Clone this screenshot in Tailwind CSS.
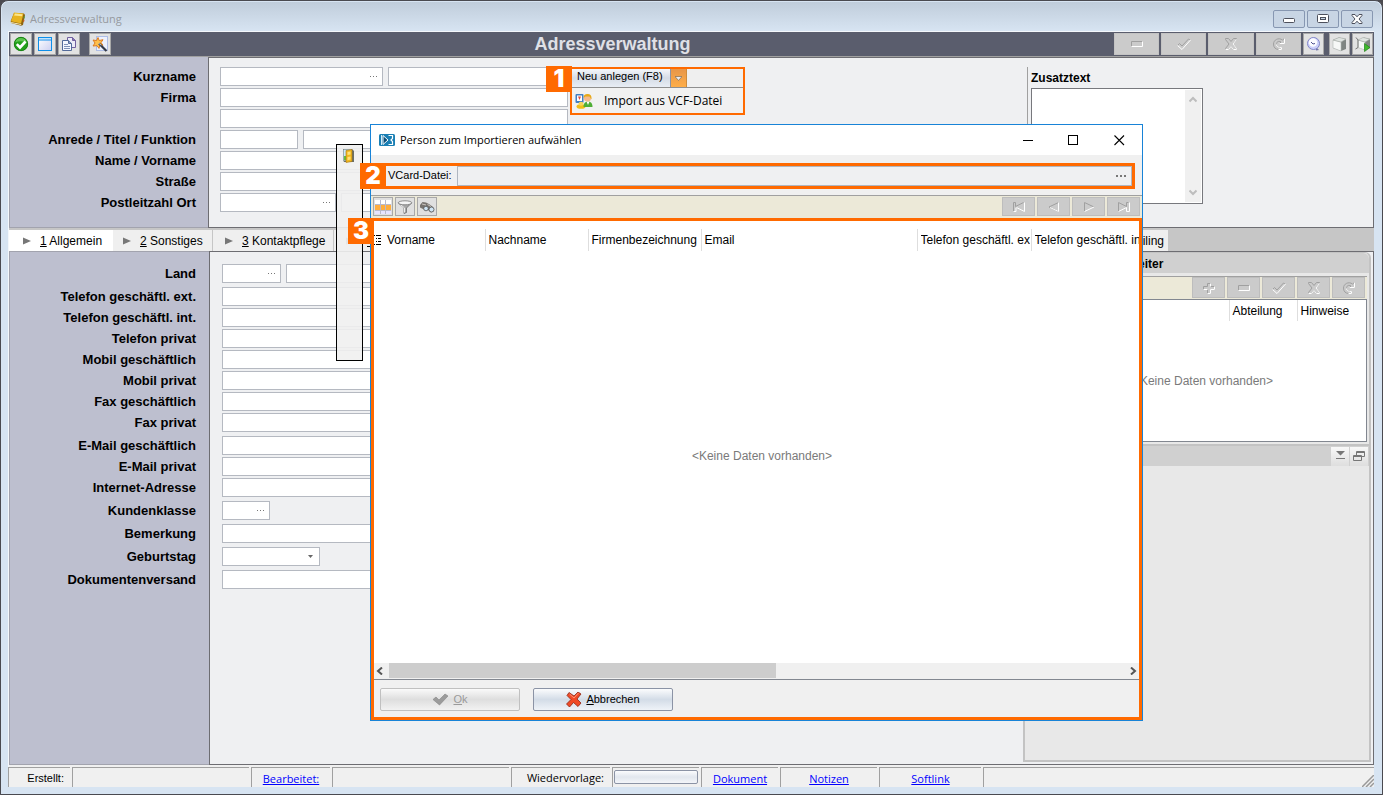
<!DOCTYPE html>
<html lang="de">
<head>
<meta charset="utf-8">
<title>Adressverwaltung</title>
<script src="https://cdn.jsdelivr.net/npm/@tailwindcss/browser@4"></script>
</head>
<body class="h-screen overflow-hidden bg-[#4b4a50] font-['Liberation_Sans',Arial,sans-serif] text-xs text-black">
<svg class="hidden">
  <symbol id="minus" viewBox="0 0 14 14"><path d="M1.500 9.500v-5h11" fill="none" stroke="#a0a0a0"/><path d="M12.500 4.500v5h-11" fill="none" stroke="#fff"/></symbol>
  <symbol id="plus" viewBox="0 0 14 14"><path d="M5.500 2.500h3v3h4v3h-4v4h-3v-4h-4v-3h4z" fill="none" stroke="#a0a0a0"/><path d="M8.500 2.500v3M12.500 5.500v3h-4v4h-3M1.500 8.500h4" fill="none" stroke="#fff"/></symbol>
  <symbol id="check" viewBox="0 0 14 14"><path d="M.5 8.500l2-2 2.500 2.500 6.500-7 1.500 1" fill="none" stroke="#a0a0a0"/><path d="M.5 8.500l4.500 4L13.500 3" fill="none" stroke="#fff"/></symbol>
  <symbol id="cross" viewBox="0 0 14 14"><path d="M1.500 1.500h3l2.500 3 2.500-3h3v1L9 7l3.500 4.500v1h-3L7 9.500l-2.500 3h-3v-1L5 7 1.500 2.500z" fill="none" stroke="#a0a0a0"/><path d="M12.500 2.500L9 7l3.500 4.500v1h-3L7 9.500l-2.500 3h-3" fill="none" stroke="#fff"/></symbol>
  <symbol id="redo" viewBox="0 0 14 14"><path d="M12.500 1.500v5h-5l1.500-1.500C6 3.500 4.500 5 4.500 7.500s2 3 5 3v2H7C3.500 12.500 1.500 10.500 1.500 7c0-4 5-7 9-4z" fill="none" stroke="#a0a0a0"/><path d="M12.500 1.500v5h-5M4.500 7.500c0 2.500 2 3 5 3v2H6.500" fill="none" stroke="#fff"/></symbol>
  <symbol id="prev" viewBox="0 0 14 14"><path d="M11.500 2.500L2 7l9.500 4.500" fill="none" stroke="#a0a0a0"/><path d="M11.500 2.500v9L3 7.500" fill="none" stroke="#fff"/></symbol>
  <symbol id="next" viewBox="0 0 14 14"><path d="M2.500 11.500v-9L12 7" fill="none" stroke="#a0a0a0"/><path d="M2.500 11.500L12 7" fill="none" stroke="#fff"/></symbol>
  <symbol id="first" viewBox="0 0 14 14"><path d="M1.500 11.500v-9h2v4l8-4" fill="none" stroke="#a0a0a0"/><path d="M12.500 2.500v9l-8-4M4 8v3.500H1.500" fill="none" stroke="#fff"/></symbol>
  <symbol id="last" viewBox="0 0 14 14"><path d="M1.500 11.500v-9l8 4v-4h2" fill="none" stroke="#a0a0a0"/><path d="M1.500 11.500l8-4v4h3v-9" fill="none" stroke="#fff"/></symbol>
  <symbol id="tri" viewBox="0 0 8 8"><path d="M0 0.500L8 4L0 7.500z" fill="#777"/></symbol>
  <symbol id="dots" viewBox="0 0 8 2"><path d="M0 0h1v1H0zM3 0h1v1H3zM6 0h1v1H6z" fill="#777"/></symbol>
</svg>

<main class="relative flex h-full flex-col rounded-t-lg border border-[#4a4a50] bg-[#d7e4f2] p-px">
  <header class="flex h-[29px] shrink-0 items-center gap-1 rounded-t-md bg-linear-to-b from-[#c0cddb] to-[#d7e4f2] px-2 pt-[5px]">
    <svg class="size-4" viewBox="0 0 16 16"><path d="M4 2l10 .5L15 4l-2 10-2 .8L1 12l-.3-2z" fill="#8d6410"/><path d="M4 1.500l9.500 1L11 12.500 1 10.300z" fill="#e7b320"/><path d="M5 2.500l7.500.7-.5 2-8-.8z" fill="#fbe58a"/><path d="M1 11l10 2 .3 1L1.300 12z" fill="#fff1bd"/><path d="M14 5l1 .5-.5 2-1-.3z" fill="#58a044"/><path d="M13.500 8.500l1 .5-.5 2-1-.3z" fill="#cf5b24"/></svg>
    <h1 class="font-['Open_Sans',sans-serif] text-[11px] text-[#969a9f]">Adressverwaltung</h1>
    <div class="ml-auto flex gap-[2px]">
      <button aria-label="Minimieren" class="flex h-[18px] w-8 items-center justify-center rounded-xs border border-[#8797b1] bg-[#c8d5e4]"><svg class="h-3 w-3" viewBox="0 0 12 12"><rect x=".5" y="5.500" width="11" height="4" rx="1" fill="#fff" stroke="#4d505c"/></svg></button>
      <button aria-label="Maximieren" class="flex h-[18px] w-8 items-center justify-center rounded-xs border border-[#8797b1] bg-[#c8d5e4]"><svg class="h-3 w-3" viewBox="0 0 12 12"><rect x=".5" y="1.500" width="11" height="8" rx="1" fill="#fff" stroke="#4d505c"/><rect x="3.500" y="4.500" width="5" height="2" fill="#c8d5e4" stroke="#4d505c"/></svg></button>
      <button aria-label="Schließen" class="flex h-[18px] w-8 items-center justify-center rounded-xs border border-[#8797b1] bg-[#c8d5e4]"><svg class="h-3 w-3" viewBox="0 0 12 12"><path d="M1 1.500h3l2 2.300 2-2.300h3v1L8 6l3 3.500v1H8L6 8.200 4 10.500H1v-1L4 6 1 2.500z" fill="#fff" stroke="#4d505c"/></svg></button>
    </div>
  </header>

  <div class="mr-[7px] mb-[6px] ml-[6px] flex min-h-0 flex-1 flex-col border-l border-t border-[#f4f7fb] bg-[#f0f0f0]">
    <div class="flex h-[25px] shrink-0 items-center border-b border-[#a0a0a0] bg-[#5a5d6d] px-px">
      <div class="flex items-center gap-[2px]">
        <button aria-label="Übernehmen" class="flex size-[22px] items-center justify-center border border-[#a8a8a8] bg-[#e2e2e2]"><svg class="size-4" viewBox="0 0 16 16"><circle cx="8" cy="8" r="7" fill="#22a01a"/><path d="M2 6.500a6.300 6.300 0 0112 0Q8 4 2 6.500z" fill="#5cc44e"/><circle cx="8" cy="8" r="6.700" fill="none" stroke="#12780c" stroke-width=".8"/><path d="M3.800 8.200L7 11.500 12.500 5.500" fill="none" stroke="#fff" stroke-width="2.600"/></svg></button>
        <button aria-label="Fenster" class="flex size-[22px] items-center justify-center border border-[#a8a8a8] bg-[#e2e2e2]"><svg class="size-4" viewBox="0 0 16 16"><defs><linearGradient id="lav" x2="1" y2="1"><stop stop-color="#fff"/><stop offset="1" stop-color="#ccd0f2"/></linearGradient></defs><rect x="1.500" y="1.500" width="13" height="13" fill="url(#lav)" stroke="#0d8ee9"/><path d="M2 2.500h12" stroke="#bfe4ff"/><path d="M1 4h14" stroke="#0d8ee9"/></svg></button>
        <button aria-label="Kopieren" class="flex size-[22px] items-center justify-center border border-[#a8a8a8] bg-[#e2e2e2]"><svg class="size-4" viewBox="0 0 16 16"><path d="M6.500 1.500h5l3 3v7h-8z" fill="#ecebf7" stroke="#71609f"/><path d="M11.500 1.500v3h3" fill="#8775b5" stroke="#71609f"/><path d="M1.500 4.500h6l3 3v7h-9z" fill="#f4f7ff" stroke="#536a9a"/><path d="M7.500 4.500v3h3" fill="#8ea0c4" stroke="#536a9a"/><path d="M3 8.500h4M3 10.500h6M3 12.500h6" stroke="#7f92b8"/></svg></button>
        <button aria-label="Assistent" class="ml-[7px] flex size-[22px] items-center justify-center border border-[#a8a8a8] bg-[#e2e2e2]"><svg class="size-4" viewBox="0 0 16 16"><rect x="4.500" y=".5" width="11" height="14" fill="#edf1fd" stroke="#aebde6"/><path d="M6 1.500l1.200 3 3.800-.8-2 3 2 2.500-3.200.2-.8 3-2-2.700L1 10l2-3L1 4l3.500.6z" fill="#ffc04a" stroke="#d9741a" stroke-width=".9"/><path d="M7 7.500l7.500 7.500" stroke="#333a48" stroke-width="2.200"/><path d="M7 7.300l2 2" stroke="#e4e6ee"/></svg></button>
      </div>
      <h2 class="flex-1 text-center text-lg leading-6 font-bold text-[#dfe0e6]">Adressverwaltung</h2>
      <div class="flex items-center gap-[2px]">
        <button disabled aria-label="Löschen" class="flex h-[22px] w-[45px] items-center justify-center border border-[#c3c3c3] bg-[#cbcbcb]"><svg class="size-[14px]"><use href="#minus"/></svg></button>
        <button disabled aria-label="Speichern" class="flex h-[22px] w-[45px] items-center justify-center border border-[#c3c3c3] bg-[#cbcbcb]"><svg class="size-[14px]"><use href="#check"/></svg></button>
        <button disabled aria-label="Abbrechen" class="flex h-[22px] w-[46px] items-center justify-center border border-[#c3c3c3] bg-[#cbcbcb]"><svg class="size-[14px]"><use href="#cross"/></svg></button>
        <button disabled aria-label="Aktualisieren" class="flex h-[22px] w-[45px] items-center justify-center border border-[#c3c3c3] bg-[#cbcbcb]"><svg class="size-[14px]"><use href="#redo"/></svg></button>
        <button aria-label="Wecker" class="flex h-[22px] w-[21px] items-center justify-center border border-[#a8a8a8] bg-[#e2e2e2]"><svg class="size-4" viewBox="0 0 16 16"><path d="M10 11l3 3-3 .5z" fill="#7173a8"/><circle cx="7.500" cy="7.500" r="6" fill="#ccd0fa" stroke="#8285c8"/><circle cx="7" cy="6.500" r="4.200" fill="#fbfbff"/><path d="M5 6l2 2 2-.5" fill="none" stroke="#4e5190"/></svg></button>
        <button aria-label="Modul" class="ml-[3px] flex h-[22px] w-[21px] items-center justify-center border border-[#a8a8a8] bg-[#e2e2e2]"><svg class="size-4 shrink-0" viewBox="0 0 16 16"><path d="M1 4l6-2.500L14 3v10l-5 2-8-3z" fill="#7f8582"/><path d="M1 4l8 2v9l-8-3z" fill="#f6f8f7" stroke="#b4b9b6" stroke-width=".6"/><path d="M1 4l6-2.500L14 3 9 6z" fill="#dfe4e1" stroke="#a9aeab" stroke-width=".6"/></svg></button>
        <button aria-label="Modul starten" class="flex h-[22px] w-[21px] items-center justify-center border border-[#a8a8a8] bg-[#e2e2e2]"><svg class="size-4 shrink-0" viewBox="0 0 16 16"><path d="M4 4l5-2.500L15 3v9l-5 2-6-3z" fill="#7f8582"/><path d="M3 4l7 2v8l-7-2.500z" fill="#f6f8f7" stroke="#b4b9b6" stroke-width=".6"/><path d="M3 4l5-2.500L15 3l-5 3z" fill="#dfe4e1" stroke="#a9aeab" stroke-width=".6"/><path d="M1 1.500l2 2.500v7.500L.5 13" fill="none" stroke="#777"/><path d="M9.500 7.500l5.500 4-5.500 4z" fill="#3fbb2c" stroke="#23821a" stroke-width=".7"/></svg></button>
      </div>
    </div>

    <section class="flex shrink-0 border-r border-[#6d6d72]">
      <div class="flex w-[199px] shrink-0 flex-col gap-[2px] border-b border-l border-[#a2a3ae] bg-[#bdbfcf] pt-[10px] pr-3 text-right text-[13px] leading-[19px] font-bold">
        <label for="kurz">Kurzname</label><label for="firma">Firma</label><span class="h-[19px]"></span><label for="anrede">Anrede / Titel / Funktion</label><label for="name">Name / Vorname</label><label for="str">Straße</label><label for="plz">Postleitzahl Ort</label>
      </div>
      <div class="flex flex-1 border-y border-l border-[#6d6d72] bg-[#eff0f2] pt-[9px] pb-[15px] pl-[11px]">
        <div class="flex flex-1 flex-col gap-[2px]">
          <div class="flex h-[19px]">
            <div class="flex w-[163px] items-center border border-[#b5b9c1] bg-white pr-1"><input id="kurz" class="min-w-0 flex-1"><button aria-label="Kurzname auswählen"><svg class="h-[2px] w-2"><use href="#dots"/></svg></button></div>
            <input aria-label="Kurzname Zusatz" class="ml-[5px] w-[180px] border border-[#b5b9c1] bg-white">
            <div class="relative z-10 ml-[2px] h-12 w-[175px] border-2 border-[#ff6a00] bg-[#efefef]">
              <div class="flex h-[18px] text-[11px]">
                <button class="w-[99px] border-r border-[#8b93a5] bg-linear-to-b from-[#f5f7fb] via-[#d5dce6] to-[#e8edf4] pb-[3px] pl-[5px] text-left leading-[15px]">Neu anlegen (F8)</button>
                <button aria-label="Weitere Aktionen" class="flex w-4 items-center justify-center border-r border-[#ce8c3c] bg-linear-to-b from-[#e79649] to-[#ffae48]"><svg class="h-[5px] w-[7px]" viewBox="0 0 7 5"><path d="M0 .5h7L3.500 4.500z" fill="#e9edf4" stroke="#7d6b55" stroke-width=".7"/></svg></button>
              </div>
              <button class="flex h-[26px] w-full items-center gap-[11px] border-t border-[#8f8f8f] bg-[#f1f1f1] px-[3px] font-['Open_Sans',sans-serif]">
                <svg class="h-4 w-[18px]" viewBox="0 0 18 16"><rect x=".5" y="1" width="8" height="9" rx="1" fill="#427fc3"/><rect x="2" y="2.500" width="5" height="5.500" fill="#fff"/><path d="M3 3.500h3L4.500 7z" fill="#dc4c45"/><ellipse cx="6" cy="13.500" rx="4.500" ry="2.300" fill="#f1bf18"/><ellipse cx="6" cy="10.800" rx="2.500" ry="2" fill="#f6d55a"/><path d="M8.500 14c0-4 2-5.500 4.500-5.500s4.500 1.500 4.500 5.500z" fill="#4fae36"/><path d="M11.500 8.500h3L13 12z" fill="#fff"/><circle cx="12.500" cy="5" r="3.600" fill="#f5b98a"/><path d="M8.500 5a4 4 0 018 0v1.500l-2-3h-4z" fill="#e6a917"/></svg>
                <span>Import aus VCF-Datei</span>
              </button>
              <span class="absolute -top-[3px] -left-[26px] flex size-[26px] items-center justify-center bg-[#ff6a00] font-['Inter',sans-serif] text-2xl font-black text-white">1</span>
            </div>
          </div>
          <input id="firma" class="h-[19px] w-[348px] border border-[#b5b9c1] bg-white">
          <input aria-label="Firma Zeile 2" class="h-[19px] w-[348px] border border-[#b5b9c1] bg-white">
          <div class="flex h-[19px] gap-[5px]"><input id="anrede" class="w-[78px] border border-[#b5b9c1] bg-white"><input aria-label="Titel" class="w-[265px] border border-[#b5b9c1] bg-white"></div>
          <input id="name" class="h-[19px] w-[348px] border border-[#b5b9c1] bg-white">
          <input id="str" class="h-[19px] w-[348px] border border-[#b5b9c1] bg-white">
          <div class="flex h-[19px] gap-[5px]"><div class="flex w-[116px] items-center border border-[#b5b9c1] bg-white pr-1"><input id="plz" class="min-w-0 flex-1"><button aria-label="Postleitzahl auswählen"><svg class="h-[2px] w-2"><use href="#dots"/></svg></button></div><input aria-label="Ort" class="w-[227px] border border-[#b5b9c1] bg-white"></div>
        </div>
        <div class="flex w-[346px] flex-col border-l border-[#a0a0a0] pl-[3px]">
          <label for="zusatz" class="h-[21px] text-xs leading-[22px] font-bold">Zusatztext</label>
          <div class="flex h-[116px] w-[172px] border border-[#77787d] bg-white">
            <textarea id="zusatz" class="min-w-0 flex-1 resize-none"></textarea>
            <div class="my-px mr-px flex w-4 flex-col items-center justify-between bg-[#f0f0f0] py-[6px]">
              <svg class="h-[7px] w-2" viewBox="0 0 8 7"><path d="M.5 5.500L4 2l3.500 3.500" fill="none" stroke="#bdbdbd" stroke-width="2"/></svg>
              <svg class="h-[7px] w-2" viewBox="0 0 8 7"><path d="M.5 1.500L4 5l3.500-3.500" fill="none" stroke="#bdbdbd" stroke-width="2"/></svg>
            </div>
          </div>
        </div>
      </div>
    </section>

    <nav class="flex h-[23px] shrink-0 items-end bg-[#c6c6c6] leading-[22px]">
      <button class="flex h-[21px] w-[104px] items-center gap-[9px] bg-white pl-[14px]"><svg class="size-2"><use href="#tri"/></svg><span><u>1</u> Allgemein</span></button>
      <button class="flex h-[21px] w-[100px] items-center gap-[9px] border-r border-[#c6c6c6] bg-[#efefef] pl-[10px]"><svg class="size-2"><use href="#tri"/></svg><span><u>2</u> Sonstiges</span></button>
      <button class="flex h-[21px] w-[121px] items-center gap-[9px] border-r border-[#c6c6c6] bg-[#efefef] pl-3"><svg class="size-2"><use href="#tri"/></svg><span><u>3</u> Kontaktpflege</span></button>
      <button class="flex h-[21px] flex-1 items-center gap-[13px] bg-[#efefef] pl-3"><svg class="size-2"><use href="#tri"/></svg><u>4</u></button>
      <button class="flex h-[21px] w-[90px] items-center justify-end bg-[#efefef] pr-1">Mailing</button>
      <span class="w-[206px]"></span>
    </nav>

    <section class="flex min-h-0 flex-1 border-r border-[#6d6d72]">
      <div class="flex w-[200px] shrink-0 flex-col gap-1 border-y border-l border-[#a2a3ae] bg-[#bdbfcf] pt-3 pr-[13px] text-right text-[13px] leading-[19px] font-bold">
        <label for="land">Land</label>
        <div class="flex flex-col gap-[2px]"><label for="tge">Telefon geschäftl. ext.</label><label for="tgi">Telefon geschäftl. int.</label><label for="tp">Telefon privat</label><label for="mg">Mobil geschäftlich</label><label for="mp">Mobil privat</label><label for="fg">Fax geschäftlich</label><label for="fp">Fax privat</label></div>
        <div class="flex flex-col gap-[2px]"><label for="eg">E-Mail geschäftlich</label><label for="ep">E-Mail privat</label><label for="ia">Internet-Adresse</label></div>
        <label for="kk">Kundenklasse</label><label for="bem">Bemerkung</label><label for="geb">Geburtstag</label><label for="dok">Dokumentenversand</label>
      </div>
      <div class="flex flex-1 border-y border-l border-[#6d6d72] bg-[#eff0f2]">
        <div class="flex flex-1 flex-col gap-1 pt-3 pl-3">
          <div class="flex h-[19px] gap-[5px]"><div class="flex w-[59px] items-center border border-[#b5b9c1] bg-white pr-1"><input id="land" class="min-w-0 flex-1"><button aria-label="Land auswählen"><svg class="h-[2px] w-2"><use href="#dots"/></svg></button></div><input aria-label="Landname" class="w-[284px] border border-[#b5b9c1] bg-white"></div>
          <div class="flex flex-col gap-[2px]">
            <input id="tge" class="h-[19px] w-[348px] border border-[#b5b9c1] bg-white"><input id="tgi" class="h-[19px] w-[348px] border border-[#b5b9c1] bg-white"><input id="tp" class="h-[19px] w-[348px] border border-[#b5b9c1] bg-white"><input id="mg" class="h-[19px] w-[348px] border border-[#b5b9c1] bg-white"><input id="mp" class="h-[19px] w-[348px] border border-[#b5b9c1] bg-white"><input id="fg" class="h-[19px] w-[348px] border border-[#b5b9c1] bg-white"><input id="fp" class="h-[19px] w-[348px] border border-[#b5b9c1] bg-white">
          </div>
          <div class="flex flex-col gap-[2px]">
            <input id="eg" class="h-[19px] w-[348px] border border-[#b5b9c1] bg-white"><input id="ep" class="h-[19px] w-[348px] border border-[#b5b9c1] bg-white"><input id="ia" class="h-[19px] w-[348px] border border-[#b5b9c1] bg-white">
          </div>
          <div class="flex h-[19px] w-12 items-center border border-[#b5b9c1] bg-white pr-1"><input id="kk" class="min-w-0 flex-1"><button aria-label="Kundenklasse auswählen"><svg class="h-[2px] w-2"><use href="#dots"/></svg></button></div>
          <input id="bem" class="h-[19px] w-[348px] border border-[#b5b9c1] bg-white">
          <div class="grid h-[19px] w-[98px] items-center border border-[#b5b9c1] bg-white"><select id="geb" class="col-start-1 row-start-1 h-full w-full appearance-none"><option></option></select><svg class="pointer-events-none col-start-1 row-start-1 mr-[6px] h-[3px] w-[5px] justify-self-end" viewBox="0 0 5 3"><path d="M0 0h5L2.500 3z" fill="#666"/></svg></div>
          <input id="dok" class="h-[19px] w-[348px] border border-[#b5b9c1] bg-white">
        </div>
        <aside class="mr-[2px] mb-[2px] flex w-[348px] flex-col rounded-t-md border-2 border-t border-[#c3c3c3] bg-[#e8e8e8]">
          <h3 class="h-5 shrink-0 rounded-t-md bg-[#d0d0d0] pl-[77px] leading-[22px] font-bold">Mitarbeiter</h3>
          <div class="mx-[2px] mt-[3px] flex h-[23px] shrink-0 items-start justify-end gap-[2px] border-t border-[#a0a0a0] bg-[#ece9d8] pr-[2px]">
            <button disabled aria-label="Hinzufügen" class="flex h-[21px] w-[33px] items-center justify-center border border-[#bdbdbd] bg-[#cbcbcb]"><svg class="size-[14px]"><use href="#plus"/></svg></button>
            <button disabled aria-label="Entfernen" class="flex h-[21px] w-[33px] items-center justify-center border border-[#bdbdbd] bg-[#cbcbcb]"><svg class="size-[14px]"><use href="#minus"/></svg></button>
            <button disabled aria-label="Bestätigen" class="flex h-[21px] w-[33px] items-center justify-center border border-[#bdbdbd] bg-[#cbcbcb]"><svg class="size-[14px]"><use href="#check"/></svg></button>
            <button disabled aria-label="Verwerfen" class="flex h-[21px] w-[33px] items-center justify-center border border-[#bdbdbd] bg-[#cbcbcb]"><svg class="size-[14px]"><use href="#cross"/></svg></button>
            <button disabled aria-label="Neu laden" class="flex h-[21px] w-[33px] items-center justify-center border border-[#bdbdbd] bg-[#cbcbcb]"><svg class="size-[14px]"><use href="#redo"/></svg></button>
          </div>
          <div class="mx-[2px] h-[143px] shrink-0 border border-[#828790] bg-white">
            <table class="w-full table-fixed border-collapse text-left"><thead><tr class="h-[21px]"><th></th><th class="w-[68px] border-l border-[#dedede] pl-[3px] font-normal">Abteilung</th><th class="w-[69px] border-l border-[#dedede] pl-[3px] font-normal">Hinweise</th></tr></thead>
            <tbody><tr><td colspan="3" class="h-[119px] pl-3 text-center text-[#7a7a7a]">&lt;Keine Daten vorhanden&gt;</td></tr></tbody></table>
          </div>
          <div class="mt-[2px] flex h-[22px] shrink-0 items-center justify-end gap-px border-t-2 border-[#c3c3c3] bg-[#d0d0d0] pr-px">
            <button aria-label="Einklappen" class="flex h-[19px] w-[18px] items-center justify-center bg-linear-to-b from-[#f8f8f8] to-[#dedede]"><svg class="size-3" viewBox="0 0 12 12"><path d="M2 1h9L6.500 5.500zM2 8h9v1H2z" fill="#777"/></svg></button>
            <button aria-label="Fenster lösen" class="flex h-[19px] w-[18px] items-center justify-center bg-linear-to-b from-[#f8f8f8] to-[#dedede]"><svg class="size-3" viewBox="0 0 12 12"><path d="M3.500 5.500v-4h8v5h-3M3.500 2.500h8M.500 5.500h8v5h-8zM.500 6.500h8" fill="none" stroke="#777"/></svg></button>
          </div>
        </aside>
      </div>
    </section>

    <footer class="mt-[2px] -ml-px flex h-5 shrink-0 gap-[2px] font-['Open_Sans',sans-serif] text-[11px]">
      <div class="w-[62px] border-t border-l border-[#a0a0a0] pr-[6px] text-right font-['Liberation_Sans',sans-serif] leading-5">Erstellt:</div>
      <div class="w-[177px] border-t border-l border-[#a0a0a0]"></div>
      <div class="w-[79px] border-t border-l border-[#a0a0a0] text-center leading-[22px]"><a href="#" class="text-[#0000ff] underline">Bearbeitet:</a></div>
      <div class="w-[177px] border-t border-l border-[#a0a0a0]"></div>
      <div class="w-[99px] border-t border-l border-[#a0a0a0] pr-[6px] text-right leading-5">Wiedervorlage:</div>
      <div class="w-[87px] border-t border-l border-[#a0a0a0] px-px pt-[2px]"><button aria-label="Wiedervorlage" class="block h-[14px] w-full rounded-xs border border-[#8b93a5] bg-linear-to-b from-[#fbfcfd] via-[#e2e7ee] to-[#f3f5f9]"></button></div>
      <div class="w-[77px] border-t border-l border-[#a0a0a0] text-center leading-[22px]"><a href="#" class="text-[#0000ff] underline">Dokument</a></div>
      <div class="w-[97px] border-t border-l border-[#a0a0a0] text-center leading-[22px]"><a href="#" class="text-[#0000ff] underline">Notizen</a></div>
      <div class="w-[102px] border-t border-l border-[#a0a0a0] text-center leading-[22px]"><a href="#" class="text-[#0000ff] underline">Softlink</a></div>
      <div class="flex flex-1 items-end justify-end border-t border-l border-[#a0a0a0]"><svg class="size-3" viewBox="0 0 12 12"><path d="M0 12L12 0M4 12l8-8M8 12l4-4" stroke="#999" stroke-width="1.500"/></svg></div>
    </footer>
  </div>
</main>

<!-- Floating tool palette -->
<div class="absolute top-[144px] left-[336px] flex h-[217px] w-[27px] justify-center border border-black bg-[#f0f0f0]/90 pt-[3px] pr-1">
  <button aria-label="Schließen" class="size-4"><svg class="size-4" viewBox="0 0 16 16"><path d="M3 1h9l2 2v11H4l-1-2z" fill="#6a6f66"/><rect x="3.500" y="1.500" width="8" height="11" fill="#cbe9fb"/><path d="M4 8h4v4H4z" fill="#66c33c"/><path d="M6 2.500L12 1.500v12l-6 1z" fill="#f0b81d" stroke="#a87412" stroke-width=".6"/><path d="M7.500 4l3-.6v3l-3 .5zM7.500 9l3-.5v3l-3 .7z" fill="#ffe07a"/></svg></button>
</div>

<!-- Import dialog -->
<div role="dialog" aria-label="Person zum Importieren aufwählen" class="absolute top-[124px] left-[370px] z-20 flex h-[597px] w-[773px] flex-col border border-[#1883d7] bg-[#f0f0f0]">
  <div class="flex h-[30px] shrink-0 items-center gap-[5px] bg-white pl-2">
    <svg class="h-3 w-4" viewBox="0 0 16 12"><rect width="16" height="12" rx="1.500" fill="#1a7fb4"/><path d="M2.500 1v10" stroke="#d5ecf8"/><path d="M4 1.500L9 6l-5 4.500z" fill="#0b4e79" stroke="#fff"/><path d="M9.500 1.500h4v3L12 6l1.500 1.500v3h-4" fill="none" stroke="#fff" stroke-width="1.200"/></svg>
    <h2 class="font-['Open_Sans',sans-serif] text-[11px]">Person zum Importieren aufwählen</h2>
    <div class="ml-auto flex">
      <button aria-label="Minimieren" class="flex w-[46px] justify-center"><svg class="size-[11px]" viewBox="0 0 11 11"><path d="M0 5.500h10" stroke="#000"/></svg></button>
      <button aria-label="Maximieren" class="flex w-[45px] justify-center"><svg class="size-[11px]" viewBox="0 0 11 11"><rect x=".5" y=".5" width="9" height="9" fill="none" stroke="#000"/></svg></button>
      <button aria-label="Schließen" class="flex w-[46px] justify-center"><svg class="size-[11px]" viewBox="0 0 11 11"><path d="M.5.5l9.500 9.500M10 .5L.5 10" stroke="#000" stroke-width="1.100"/></svg></button>
    </div>
  </div>
  <div class="relative mt-2 mr-[7px] -ml-px flex h-[26px] shrink-0 items-stretch border-3 border-[#ff6a00] bg-[#eff0f2] pl-[15px]">
    <span class="absolute -top-[3px] -left-[13px] flex size-[26px] items-center justify-center bg-[#ff6a00] font-['Inter',sans-serif] text-2xl font-black text-white">2</span>
    <label for="vcard" class="w-[69px] text-[11px] leading-[18px]">VCard-Datei:</label>
    <div class="flex flex-1 items-center border border-[#b0b6c0] pr-1"><input id="vcard" class="min-w-0 flex-1"><button aria-label="VCard-Datei wählen"><svg class="h-[2px] w-[11px]" viewBox="0 0 11 2"><path d="M0 0h2v2H0zM4 0h2v2H4zM8 0h2v2H8z" fill="#777"/></svg></button></div>
  </div>
  <div class="mt-[6px] flex h-[23px] shrink-0 items-start gap-[2px] border-t border-[#a0a0a0] bg-[#ece9d8] px-[2px] pt-px">
    <button aria-label="Tabellenansicht" class="flex h-[19px] w-5 items-center justify-center border border-[#a8a8a8] bg-[#e0e0e0]"><svg class="h-[14px] w-4" viewBox="0 0 16 14"><rect width="16" height="14" fill="#b9bacb"/><path d="M0 0h5v4H0zM6 0h4v4H6zM11 0h5v4h-5z" fill="#fff"/><path d="M0 5h5v5H0zM6 5h4v5H6zM11 5h5v5h-5z" fill="#ffae3e"/><path d="M0 11h5v3H0zM6 11h4v3H6zM11 11h5v3h-5z" fill="#e6e4ff"/></svg></button>
    <button aria-label="Filter" class="flex h-[19px] w-5 items-center justify-center border border-[#a8a8a8] bg-[#e0e0e0]"><svg class="h-[14px] w-4" viewBox="0 0 16 14"><path d="M1.500 3L7 8v5.500l2.500-1V8l5-5z" fill="#a8a8a8" stroke="#6c6c6c" stroke-width=".8"/><path d="M4 5l3.500 3v4.500" fill="none" stroke="#eee"/><ellipse cx="8" cy="2.800" rx="6.800" ry="2" fill="#f4f4f4" stroke="#777" stroke-width=".8"/></svg></button>
    <button aria-label="Suchen" class="flex h-[19px] w-5 items-center justify-center border border-[#a8a8a8] bg-[#e0e0e0]"><svg class="h-[14px] w-4" viewBox="0 0 16 14"><path d="M1 5l2.500-3L7 2.500 10 4l4 3 1 4-3 1.500L8 9l-3 .5L1 7.500z" fill="#77736f"/><circle cx="7" cy="8.500" r="2.300" fill="#cfe4f3" stroke="#555" stroke-width=".8"/><circle cx="12.500" cy="9.500" r="2.500" fill="#cfe4f3" stroke="#555" stroke-width=".8"/><path d="M3 4l4 1M8.500 4.500l3.500 2" stroke="#c9c5c0"/></svg></button>
    <div class="ml-auto flex gap-[2px]">
      <button disabled aria-label="Erster" class="flex h-[19px] w-[33px] items-center justify-center border border-[#bdbdbd] bg-[#cbcbcb]"><svg class="size-[14px]"><use href="#first"/></svg></button>
      <button disabled aria-label="Zurück" class="flex h-[19px] w-[33px] items-center justify-center border border-[#bdbdbd] bg-[#cbcbcb]"><svg class="size-[14px]"><use href="#prev"/></svg></button>
      <button disabled aria-label="Weiter" class="flex h-[19px] w-[33px] items-center justify-center border border-[#bdbdbd] bg-[#cbcbcb]"><svg class="size-[14px]"><use href="#next"/></svg></button>
      <button disabled aria-label="Letzter" class="flex h-[19px] w-[33px] items-center justify-center border border-[#bdbdbd] bg-[#cbcbcb]"><svg class="size-[14px]"><use href="#last"/></svg></button>
    </div>
  </div>
  <div class="relative flex min-h-0 flex-1 flex-col border-3 border-[#ff6a00]">
    <span class="absolute -top-[3px] -left-[26px] flex size-[26px] items-center justify-center bg-[#ff6a00] font-['Inter',sans-serif] text-2xl font-black text-white">3</span>
    <div class="flex min-h-0 flex-1 flex-col overflow-hidden bg-white pt-2">
      <table class="w-full table-fixed border-collapse text-left">
        <thead><tr class="h-[22px]">
          <th class="w-[11px]"><svg class="h-[11px] w-2" viewBox="0 0 8 11"><path d="M0 .5h1M2 .5h5M2 3.500h1M4 3.500h3M2 6.500h1M4 6.500h3M0 9.500h1M2 9.500h5" stroke="#000"/></svg></th>
          <th class="w-[100px] overflow-hidden pl-[2px] font-normal">Vorname</th>
          <th class="w-[103px] overflow-hidden border-l border-[#dedede] pl-[3px] font-normal">Nachname</th>
          <th class="w-[113px] border-x border-[#dedede] pl-[3px] font-normal"><div class="w-[108px] overflow-hidden">Firmenbezeichnung</div></th>
          <th class="w-[216px] overflow-hidden pl-[3px] font-normal">Email</th>
          <th class="w-[114px] border-l border-[#dedede] pl-[3px] font-normal"><div class="w-[109px] overflow-hidden whitespace-nowrap">Telefon geschäftl. ext.</div></th>
          <th class="border-l border-[#dedede] pl-[3px] font-normal"><div class="overflow-hidden whitespace-nowrap">Telefon geschäftl. int.</div></th>
        </tr></thead>
      </table>
      <p class="mt-[197px] pl-[11px] text-center leading-4 text-[#7a7a7a]">&lt;Keine Daten vorhanden&gt;</p>
    </div>
    <div class="flex h-4 shrink-0 items-start bg-[#f0f0f0]">
      <svg class="mt-1 mr-[6px] ml-[2px] h-2 w-[7px]" viewBox="0 0 7 8"><path d="M6 .5L2 4l4 3.500" fill="none" stroke="#555" stroke-width="2"/></svg>
      <div class="h-[15px] w-[387px] bg-[#cdcdcd]"></div>
      <svg class="mt-1 mr-[2px] ml-auto h-2 w-[7px]" viewBox="0 0 7 8"><path d="M1 .5L5 4 1 7.500" fill="none" stroke="#555" stroke-width="2"/></svg>
    </div>
    <div class="flex h-[38px] shrink-0 gap-[13px] border-t border-[#828790] pt-2 pl-[6px] text-[11px]">
      <button disabled class="flex h-[23px] w-[140px] items-center justify-center gap-1 rounded-xs border border-[#c0c0c0] bg-linear-to-b from-[#fafafa] via-[#dedede] to-[#f2f2f2] text-[#9a9a9a]"><svg class="h-4 w-[17px]" viewBox="0 0 17 16"><path d="M1 7.500l3-2.500 3 3 6-6 3 2-8.500 9z" fill="#9b9b9b" stroke="#858585" stroke-width=".6"/></svg><span><u>O</u>k</span></button>
      <button class="flex h-[23px] w-[140px] items-center justify-center gap-1 rounded-xs border border-[#8b93a5] bg-linear-to-b from-[#fbfcfd] via-[#d3dce7] to-[#eff3f8]"><svg class="h-4 w-4" viewBox="0 0 16 16"><path d="M3 .5l5 3.500 4-4 3 2-4 5 4 4-3 3.500-4.500-4-4 4.500-3-3L5 7.500 1 3.500z" fill="#f04a26" stroke="#8e2412" stroke-width=".8"/><path d="M3.500 2L8 6l4.500-5" fill="none" stroke="#ff9272"/></svg><span><u>A</u>bbrechen</span></button>
    </div>
  </div>
</div>
</body>
</html>
